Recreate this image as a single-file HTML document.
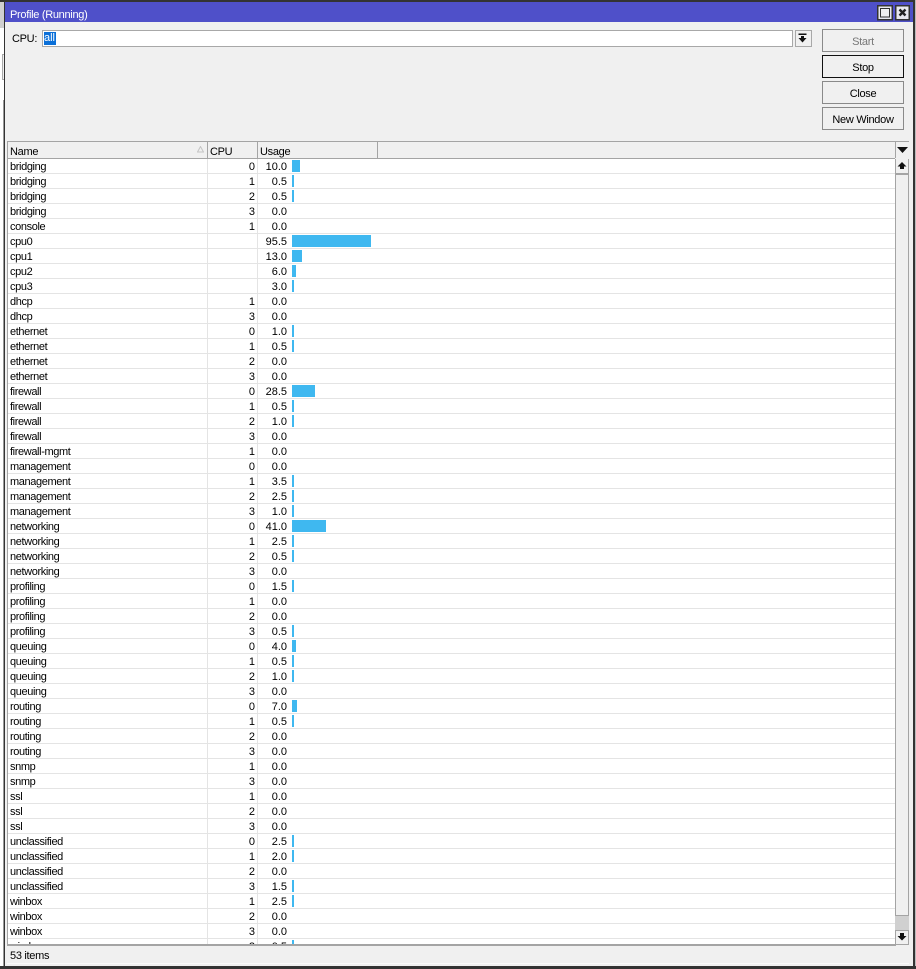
<!DOCTYPE html>
<html><head><meta charset="utf-8"><title>Profile (Running)</title>
<style>
html,body{margin:0;padding:0;background:#fff}
body{width:916px;height:969px;position:relative;overflow:hidden;font:11px/14px "Liberation Sans",sans-serif;color:#000;letter-spacing:-.3px}
.a{position:absolute}
#win{left:5px;top:2px;width:908px;height:964px;background:#f0f0f0}
#tb{left:5px;top:2px;width:908px;height:20px;background:#4f50c9}
.btn{position:absolute;left:822px;width:80px;height:21px;border:1px solid #8a8a8a;background:#f0f0f0;text-align:center;line-height:25px}
#list{left:8px;top:159px;width:887px;height:785px;background:#fff;overflow:hidden}
.r{position:relative;height:14px;border-bottom:1px solid #e4e4e4;line-height:14px;white-space:nowrap}
.r b{font-weight:400;position:absolute;top:1px}
.r .n{left:2px;letter-spacing:-.38px}
.r .c{right:640px;letter-spacing:0}
.r .u{left:249px;width:30px;text-align:right;letter-spacing:0}
.r i{position:absolute;left:284px;top:1px;height:12px;background:#3fb8f0}
.hd{position:absolute;top:145px;line-height:14px}
</style></head><body>
<div class="a" style="left:0;top:0;width:916px;height:2px;background:#333"></div>
<div class="a" style="left:0;top:2px;width:4px;height:26px;background:#d0d0d0"></div>
<div class="a" style="left:2px;top:54px;width:2px;height:24px;background:#f0f0f0;border:1px solid #aaa;border-right:0"></div>
<div class="a" style="left:4px;top:0;width:1px;height:969px;background:#333"></div>
<div class="a" style="left:3px;top:100px;width:1px;height:869px;background:#999"></div>
<div class="a" style="left:913px;top:0;width:2px;height:969px;background:#333"></div>
<div class="a" style="left:915px;top:0;width:1px;height:969px;background:#bbb"></div>
<div class="a" style="left:0;top:966px;width:916px;height:3px;background:#333"></div>
<div class="a" id="win"></div>
<div class="a" id="tb"></div>
<div class="a" style="left:10px;top:8px;color:#fff">Profile (Running)</div>
<svg class="a" style="left:877px;top:5px" width="33" height="16" viewBox="0 0 33 16"><rect x=".75" y=".75" width="14.500" height="14" fill="#e8e8ee" stroke="#333" stroke-width="1.500"/><rect x="3.500" y="3.500" width="9" height="8.500" fill="#f0f0f0" stroke="#333"/><rect x="18.750" y=".75" width="13.500" height="14" fill="#e8e8ee" stroke="#333" stroke-width="1.500"/><path d="M22.500 4.500l6 6M28.500 4.500l-6 6" stroke="#222" stroke-width="2.400"/></svg>

<div class="a" style="left:12px;top:32px">CPU:</div>
<div class="a" style="left:42px;top:30px;width:749px;height:15px;background:#fff;border:1px solid #a8a8a8"></div>
<div class="a" style="left:44px;top:32px;height:13px;width:12px;background:#0a6fd8;color:#fff;line-height:13px;letter-spacing:0">all</div>
<div class="a" style="left:795px;top:30px;width:15px;height:15px;background:#f0f0f0;border:1px solid #a8a8a8"></div>
<svg class="a" style="left:797px;top:33px" width="11" height="11" viewBox="0 0 11 11"><path d="M1.500 .5h8v1.500h-8zM4 3h3v2h2.500L5.500 9.500 1.500 5H4z" fill="#111"/></svg>

<div class="btn" style="top:29px;color:#777">Start</div>
<div class="btn" style="top:55px;border-color:#111">Stop</div>
<div class="btn" style="top:81px">Close</div>
<div class="btn" style="top:107px">New Window</div>

<div class="a" style="left:7px;top:141px;width:902px;height:1px;background:#a4a4a4"></div>
<div class="a" style="left:7px;top:158px;width:888px;height:1px;background:#a4a4a4"></div>
<div class="a" style="left:7px;top:141px;width:1px;height:804px;background:#a4a4a4"></div>
<div class="a" style="left:207px;top:142px;width:1px;height:16px;background:#a4a4a4"></div>
<div class="a" style="left:257px;top:142px;width:1px;height:16px;background:#a4a4a4"></div>
<div class="a" style="left:377px;top:142px;width:1px;height:16px;background:#a4a4a4"></div>
<div class="a" style="left:895px;top:142px;width:1px;height:16px;background:#a4a4a4"></div>
<div class="hd" style="left:10px">Name</div>
<div class="hd" style="left:210px">CPU</div>
<div class="hd" style="left:260px">Usage</div>
<svg class="a" style="left:197px;top:146px" width="7" height="7" viewBox="0 0 7 7"><path d="M3.500 .5L.5 6h6z" fill="none" stroke="#c4c4c4"/></svg>

<div class="a" id="list">
<div class="r"><b class="n">bridging</b><b class="c">0</b><b class="u">10.0</b><i style="width:8px"></i></div>
<div class="r"><b class="n">bridging</b><b class="c">1</b><b class="u">0.5</b><i style="width:2px"></i></div>
<div class="r"><b class="n">bridging</b><b class="c">2</b><b class="u">0.5</b><i style="width:2px"></i></div>
<div class="r"><b class="n">bridging</b><b class="c">3</b><b class="u">0.0</b></div>
<div class="r"><b class="n">console</b><b class="c">1</b><b class="u">0.0</b></div>
<div class="r"><b class="n">cpu0</b><b class="u">95.5</b><i style="width:79px"></i></div>
<div class="r"><b class="n">cpu1</b><b class="u">13.0</b><i style="width:10px"></i></div>
<div class="r"><b class="n">cpu2</b><b class="u">6.0</b><i style="width:4px"></i></div>
<div class="r"><b class="n">cpu3</b><b class="u">3.0</b><i style="width:2px"></i></div>
<div class="r"><b class="n">dhcp</b><b class="c">1</b><b class="u">0.0</b></div>
<div class="r"><b class="n">dhcp</b><b class="c">3</b><b class="u">0.0</b></div>
<div class="r"><b class="n">ethernet</b><b class="c">0</b><b class="u">1.0</b><i style="width:2px"></i></div>
<div class="r"><b class="n">ethernet</b><b class="c">1</b><b class="u">0.5</b><i style="width:2px"></i></div>
<div class="r"><b class="n">ethernet</b><b class="c">2</b><b class="u">0.0</b></div>
<div class="r"><b class="n">ethernet</b><b class="c">3</b><b class="u">0.0</b></div>
<div class="r"><b class="n">firewall</b><b class="c">0</b><b class="u">28.5</b><i style="width:23px"></i></div>
<div class="r"><b class="n">firewall</b><b class="c">1</b><b class="u">0.5</b><i style="width:2px"></i></div>
<div class="r"><b class="n">firewall</b><b class="c">2</b><b class="u">1.0</b><i style="width:2px"></i></div>
<div class="r"><b class="n">firewall</b><b class="c">3</b><b class="u">0.0</b></div>
<div class="r"><b class="n">firewall-mgmt</b><b class="c">1</b><b class="u">0.0</b></div>
<div class="r"><b class="n">management</b><b class="c">0</b><b class="u">0.0</b></div>
<div class="r"><b class="n">management</b><b class="c">1</b><b class="u">3.5</b><i style="width:2px"></i></div>
<div class="r"><b class="n">management</b><b class="c">2</b><b class="u">2.5</b><i style="width:2px"></i></div>
<div class="r"><b class="n">management</b><b class="c">3</b><b class="u">1.0</b><i style="width:2px"></i></div>
<div class="r"><b class="n">networking</b><b class="c">0</b><b class="u">41.0</b><i style="width:34px"></i></div>
<div class="r"><b class="n">networking</b><b class="c">1</b><b class="u">2.5</b><i style="width:2px"></i></div>
<div class="r"><b class="n">networking</b><b class="c">2</b><b class="u">0.5</b><i style="width:2px"></i></div>
<div class="r"><b class="n">networking</b><b class="c">3</b><b class="u">0.0</b></div>
<div class="r"><b class="n">profiling</b><b class="c">0</b><b class="u">1.5</b><i style="width:2px"></i></div>
<div class="r"><b class="n">profiling</b><b class="c">1</b><b class="u">0.0</b></div>
<div class="r"><b class="n">profiling</b><b class="c">2</b><b class="u">0.0</b></div>
<div class="r"><b class="n">profiling</b><b class="c">3</b><b class="u">0.5</b><i style="width:2px"></i></div>
<div class="r"><b class="n">queuing</b><b class="c">0</b><b class="u">4.0</b><i style="width:4px"></i></div>
<div class="r"><b class="n">queuing</b><b class="c">1</b><b class="u">0.5</b><i style="width:2px"></i></div>
<div class="r"><b class="n">queuing</b><b class="c">2</b><b class="u">1.0</b><i style="width:2px"></i></div>
<div class="r"><b class="n">queuing</b><b class="c">3</b><b class="u">0.0</b></div>
<div class="r"><b class="n">routing</b><b class="c">0</b><b class="u">7.0</b><i style="width:5px"></i></div>
<div class="r"><b class="n">routing</b><b class="c">1</b><b class="u">0.5</b><i style="width:2px"></i></div>
<div class="r"><b class="n">routing</b><b class="c">2</b><b class="u">0.0</b></div>
<div class="r"><b class="n">routing</b><b class="c">3</b><b class="u">0.0</b></div>
<div class="r"><b class="n">snmp</b><b class="c">1</b><b class="u">0.0</b></div>
<div class="r"><b class="n">snmp</b><b class="c">3</b><b class="u">0.0</b></div>
<div class="r"><b class="n">ssl</b><b class="c">1</b><b class="u">0.0</b></div>
<div class="r"><b class="n">ssl</b><b class="c">2</b><b class="u">0.0</b></div>
<div class="r"><b class="n">ssl</b><b class="c">3</b><b class="u">0.0</b></div>
<div class="r"><b class="n">unclassified</b><b class="c">0</b><b class="u">2.5</b><i style="width:2px"></i></div>
<div class="r"><b class="n">unclassified</b><b class="c">1</b><b class="u">2.0</b><i style="width:2px"></i></div>
<div class="r"><b class="n">unclassified</b><b class="c">2</b><b class="u">0.0</b></div>
<div class="r"><b class="n">unclassified</b><b class="c">3</b><b class="u">1.5</b><i style="width:2px"></i></div>
<div class="r"><b class="n">winbox</b><b class="c">1</b><b class="u">2.5</b><i style="width:2px"></i></div>
<div class="r"><b class="n">winbox</b><b class="c">2</b><b class="u">0.0</b></div>
<div class="r"><b class="n">winbox</b><b class="c">3</b><b class="u">0.0</b></div>
<div class="r"><b class="n">wireless</b><b class="c">2</b><b class="u">0.5</b><i style="width:2px"></i></div>
<div class="a" style="left:199px;top:0;width:1px;height:785px;background:#e4e4e4"></div>
<div class="a" style="left:249px;top:0;width:1px;height:785px;background:#e4e4e4"></div>
</div>
<div class="a" style="left:7px;top:944px;width:889px;height:2px;background:#a4a4a4"></div>

<div class="a" style="left:895px;top:159px;width:14px;height:786px;background:#d0d0d0"></div>
<div class="a" style="left:895px;top:159px;width:12px;height:14px;background:#f0f0f0;border:solid #a4a4a4;border-width:0 1px 1px 1px"></div>
<div class="a" style="left:895px;top:174px;width:12px;height:740px;background:#f0f0f0;border:1px solid #a4a4a4"></div>
<div class="a" style="left:895px;top:930px;width:12px;height:13px;background:#f0f0f0;border:1px solid #a4a4a4"></div>
<svg class="a" style="left:897px;top:147px" width="11" height="7" viewBox="0 0 11 7"><path d="M0 0h11L5.500 6z" fill="#111"/></svg>
<svg class="a" style="left:897px;top:162px" width="10" height="8" viewBox="0 0 10 8"><path d="M5 0l4.500 4.500H7V7H3V4.500H.5z" fill="#111"/></svg>
<svg class="a" style="left:897px;top:933px" width="10" height="8" viewBox="0 0 10 8"><path d="M3 0h4v3h2.500L5 7.500.5 3H3z" fill="#111"/></svg>

<div class="a" style="left:10px;top:949px">53 items</div>
<div class="a" style="left:7px;top:963px;width:902px;height:1px;background:#fafafa"></div>
</body></html>
